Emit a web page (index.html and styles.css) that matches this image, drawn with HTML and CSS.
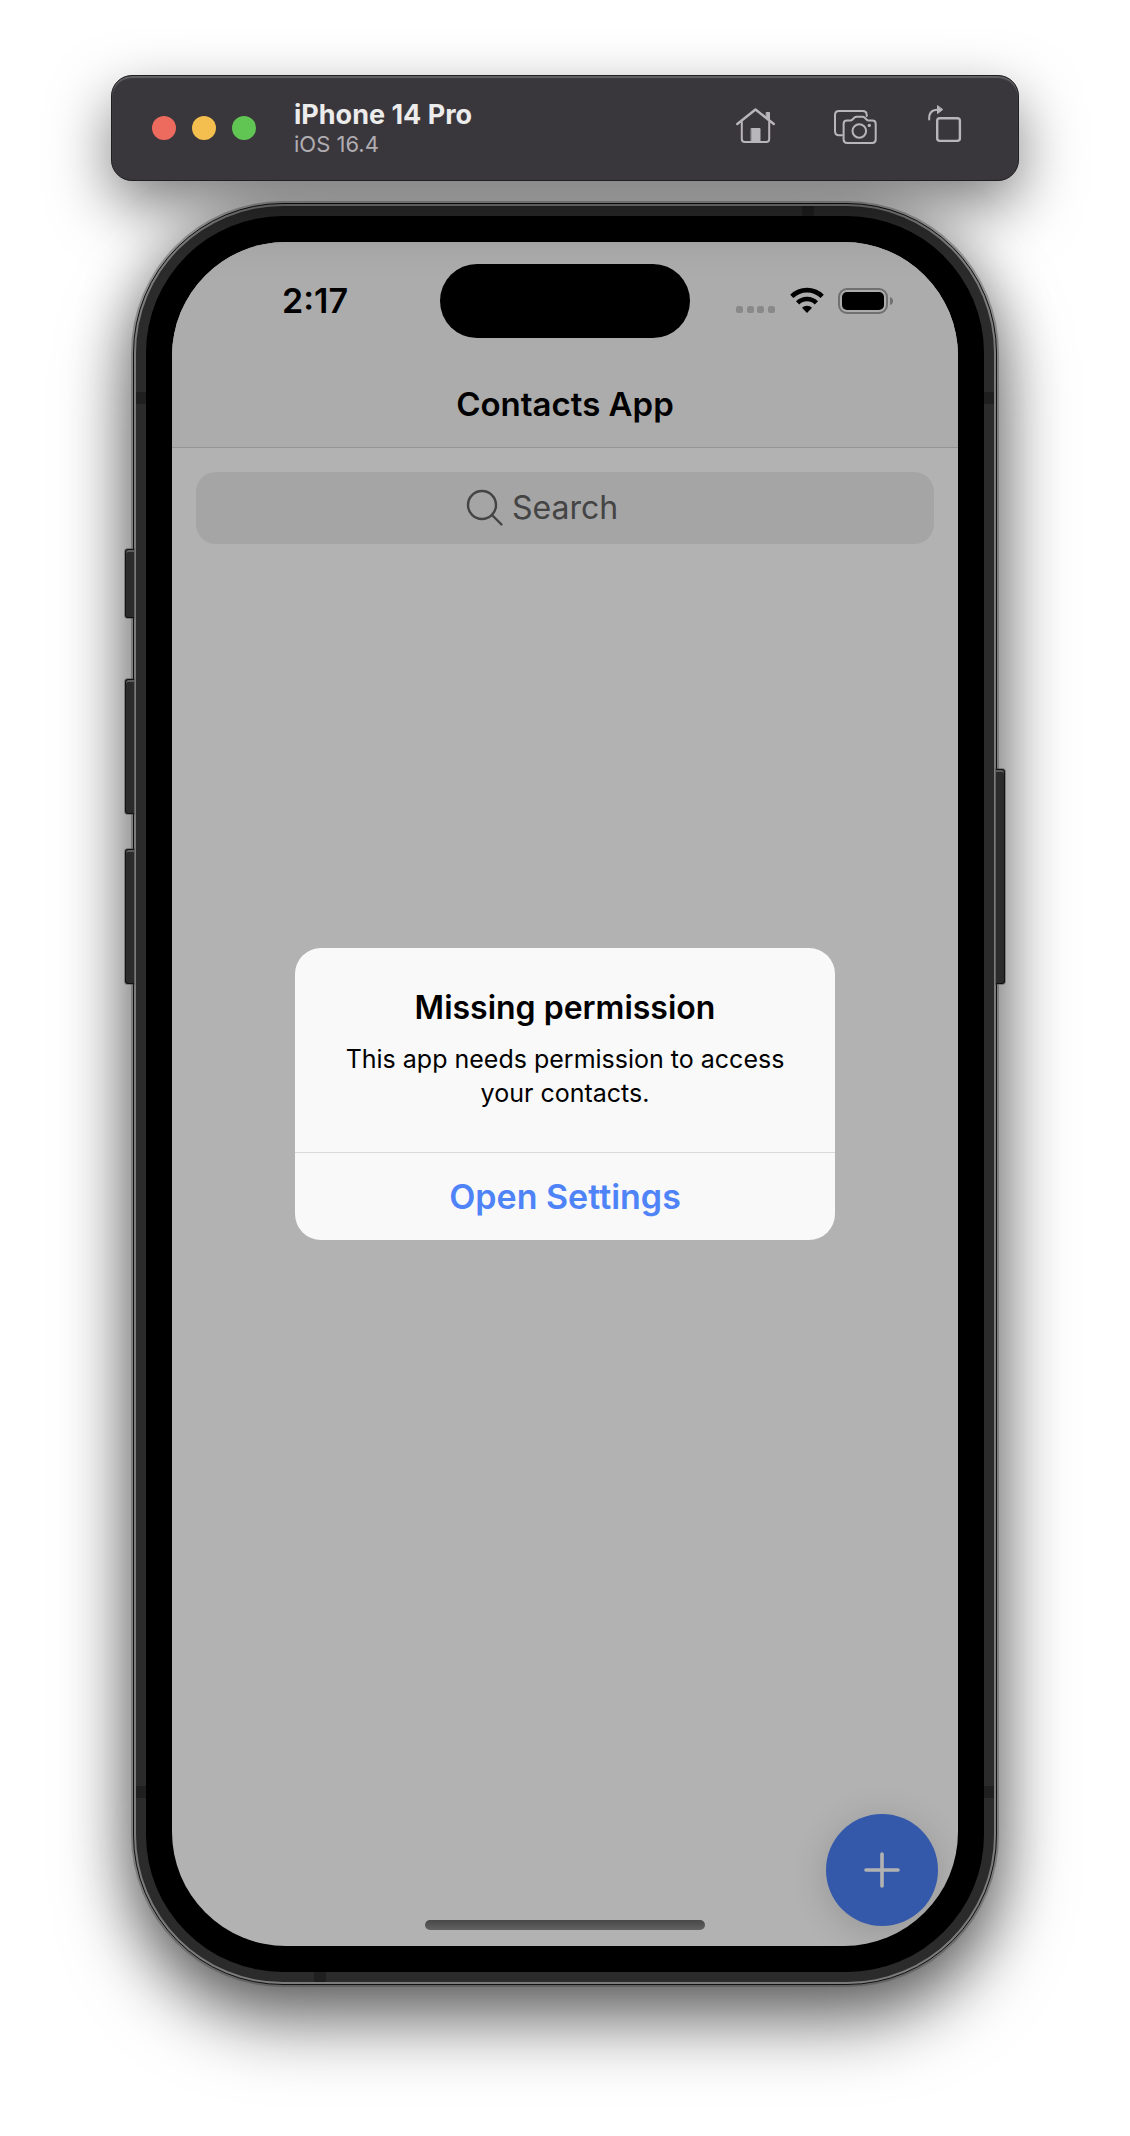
FILE: index.html
```html
<!DOCTYPE html>
<html lang="en">
<head>
<meta charset="utf-8">
<meta name="viewport" content="width=device-width, initial-scale=1">
<title>iPhone 14 Pro – Contacts App</title>
<link rel="stylesheet" href="styles.css">
</head>
<body>
<main class="simulator">
  <header class="toolbar">
    <div class="lights">
      <button class="light light-close" aria-label="Close"></button>
      <button class="light light-minimize" aria-label="Minimize"></button>
      <button class="light light-zoom" aria-label="Zoom"></button>
    </div>
    <div class="device-info">
      <div class="device-name">iPhone 14 Pro</div>
      <div class="device-os">iOS 16.4</div>
    </div>
    <div class="tools">
      <button class="tool" aria-label="Home">
        <svg width="44" height="44" viewBox="0 0 44 44" fill="none" stroke="currentColor" stroke-width="2" stroke-linecap="round" stroke-linejoin="round">
          <path d="M1.300 18 19.500 3.500 37.800 18" stroke-width="2.400"/>
          <path d="M5.800 16v17q0 3 3 3h21.400q3 0 3-3V16"/>
          <path d="M30.500 6.500h3v7l-3-2.400z" fill="currentColor" stroke-width="1"/>
          <path d="M15.500 22.500h8.500V36h-8.500z" fill="currentColor" stroke-width="1"/>
        </svg>
      </button>
      <button class="tool" aria-label="Screenshot">
        <svg width="48" height="44" viewBox="0 0 48 44" fill="none" stroke="currentColor" stroke-width="2" stroke-linecap="round" stroke-linejoin="round">
          <path d="M14 29.300h-3q-4 0-4-4V9q0-4 4-4h23.700q4 0 4 4v1"/>
          <path d="M19 14.500h3.500q1 0 2-1l2-2q1-.8 2-.8h6q1 0 2 .8l2 2q1 1 2 1h3.800q3.400 0 3.400 3.400v15.700q0 3.400-3.400 3.400H19q-3.400 0-3.400-3.400V17.900q0-3.400 3.400-3.400z"/>
          <circle cx="31.300" cy="25" r="6.800"/>
          <circle cx="41.300" cy="19.400" r="1.700" fill="currentColor" stroke="none"/>
        </svg>
      </button>
      <button class="tool" aria-label="Rotate">
        <svg width="44" height="44" viewBox="0 0 44 44" fill="none" stroke="currentColor" stroke-width="2" stroke-linecap="round" stroke-linejoin="round">
          <rect x="13.200" y="12.200" width="22.700" height="22.700" rx="2.600" stroke-width="2.400"/>
          <path d="M5.200 13.500q-.6-9.700 8.300-9.700"/>
          <path d="M13.500 0v7.600L18.500 3.800z" fill="currentColor" stroke-width="1"/>
        </svg>
      </button>
    </div>
  </header>

  <section class="phone">
    <span class="key key-silent"></span>
    <span class="key key-up"></span>
    <span class="key key-down"></span>
    <span class="key key-power"></span>
    <div class="band">
      <span class="seam seam-top"></span>
      <span class="seam seam-bottom"></span>
      <span class="seam seam-side seam-high"></span>
      <span class="seam seam-side seam-low"></span>
      <div class="bezel">
        <div class="screen">
          <div class="app-header">
            <div class="status-bar">
              <time class="clock">2:17</time>
              <div class="island"></div>
              <div class="indicators">
                <svg width="40" height="26" viewBox="0 0 40 26" fill="#898989">
                  <rect x="0" y="18" width="7" height="7" rx="2.600"/><rect x="11" y="18" width="7" height="7" rx="2.600"/><rect x="21" y="18" width="7" height="7" rx="2.600"/><rect x="32" y="18" width="7" height="7" rx="2.600"/>
                </svg>
                <svg width="34" height="26" viewBox="0 0 34 26" fill="none" stroke="#000" stroke-width="4.600">
                  <path d="M1.800 8.400a21.500 21.500 0 0 1 30.400 0"/>
                  <path d="M7.600 14.800a13.400 13.400 0 0 1 18.800 0"/>
                  <path d="M12 19.800a7 7 0 0 1 10 0L17 25z" fill="#000" stroke="none"/>
                </svg>
                <svg width="56" height="26" viewBox="0 0 56 26">
                  <rect x="1" y="1" width="48" height="24" rx="8" fill="none" stroke="#707070" stroke-width="2"/>
                  <rect x="4" y="4" width="42" height="18" rx="5"/>
                  <path d="M52 9q3 1 3 4t-3 4z" fill="#707070"/>
                </svg>
              </div>
            </div>
            <h1 class="app-title">Contacts App</h1>
          </div>
          <label class="search">
            <svg width="38" height="38" viewBox="0 0 38 38" fill="none" stroke="#444" stroke-width="2.400" stroke-linecap="round">
              <circle cx="16" cy="16" r="14"/><path d="M26 26l9.500 9.500"/>
            </svg>
            <input class="search-input" type="text" placeholder="Search" aria-label="Search">
          </label>
          <div class="dialog" role="alertdialog" aria-labelledby="dialog-title" aria-describedby="dialog-text">
            <div class="dialog-body">
              <h2 class="dialog-title" id="dialog-title">Missing permission</h2>
              <p class="dialog-text" id="dialog-text">This app needs permission to access your contacts.</p>
            </div>
            <button class="dialog-action">Open Settings</button>
          </div>
          <button class="add" aria-label="Add contact">
            <svg width="36" height="36" viewBox="0 0 36 36" fill="none" stroke="#b2b2b2" stroke-width="3.600" stroke-linecap="round"><path d="M18 2v32M2 18h32"/></svg>
          </button>
          <span class="home-indicator"></span>
        </div>
      </div>
    </div>
  </section>
</main>
</body>
</html>
```
FILE: styles.css
```css
* {
  box-sizing: border-box;
}

body {
  margin: 0;
  background: #fff;
  color: #000;
  font-family: Inter, "Liberation Sans", sans-serif;
}

button {
  border: 0;
  padding: 0;
  font: inherit;
}

svg {
  display: block;
  flex: none;
  overflow: visible;
}

.simulator {
  max-width: 1130px;
  margin: 0 auto;
  padding: 75px 111px 150px;
  overflow: hidden;
}

/* Simulator window toolbar */
.toolbar {
  position: relative;
  z-index: 1;
  display: flex;
  align-items: center;
  height: 106px;
  padding: 0 50px 0 40px;
  border: 1px solid #1f1e20;
  border-radius: 21px;
  background: #3a373c;
  box-shadow: inset 0 2px 1px #626164, 0 24px 60px rgba(0, 0, 0, 0.5);
}

.lights {
  display: flex;
  gap: 16px;
}

.light {
  width: 24px;
  height: 24px;
  border-radius: 50%;
}

.light-close { background: #ed6a5e; }
.light-minimize { background: #f5bf4f; }
.light-zoom { background: #61c554; }

.device-info {
  margin-left: 38px;
}

.device-name {
  color: #ececec;
  font-size: 27px;
  font-weight: 700;
  line-height: 32px;
}

.device-os {
  color: #b0adb3;
  font-size: 22px;
  line-height: 26px;
}

.tools {
  display: flex;
  gap: 48px;
  margin-left: auto;
}

.tool {
  background: none;
  color: #b8b5bb;
}

/* Phone body */
.phone {
  position: relative;
  margin: 22px 22px 0;
  border: 1px solid #111;
  border-radius: 150px;
  background: #7b7b7b;
  padding: 2px;
  box-shadow: 0 0 0 2px rgba(60, 60, 60, 0.35), 0 0 60px rgba(0, 0, 0, 0.3), 0 36px 72px rgba(0, 0, 0, 0.55);
}

.band {
  position: relative;
  padding: 10px;
  border-radius: 147px;
  background: #2b2b2b;
}

.bezel {
  position: relative;
  padding: 26px;
  border-radius: 137px;
  background: #000;
}

.key {
  position: absolute;
  left: -9px;
  width: 9px;
  border: 1px solid #111;
  border-right: 0;
  border-radius: 3px 0 0 3px;
  background: #2b2b2b;
  box-shadow: inset 0 2px #5c5c5c, 0 0 0 1px rgba(60, 60, 60, 0.4);
}

.key-silent { top: 345px; height: 69px; }
.key-up { top: 475px; height: 135px; }
.key-down { top: 645px; height: 135px; }

.key-power {
  top: 565px;
  right: -9px;
  left: auto;
  height: 215px;
  border-right: 1px solid #111;
  border-left: 0;
  border-radius: 0 3px 3px 0;
}

.seam {
  position: absolute;
  width: 12px;
  height: 10px;
  background: #1f1f1f;
}

.seam-top { top: 0; right: 180px; }
.seam-bottom { bottom: 0; left: 178px; }
.seam-side { right: 0; left: 0; width: auto; height: 12px; }
.seam-high { top: 186px; }
.seam-low { bottom: 184px; }

/* App screen */
.screen {
  position: relative;
  display: flex;
  flex-direction: column;
  min-height: 1704px;
  border-radius: 114px;
  background: #b2b2b2;
  overflow: hidden;
}

.app-header {
  border-bottom: 1px solid #959595;
  background: #acacac;
}

.status-bar {
  display: grid;
  grid-template-columns: 1fr 250px 1fr;
  align-items: center;
  padding-top: 22px;
}

.clock {
  padding-left: 18px;
  font-size: 34px;
  font-weight: 600;
  line-height: 40px;
  text-align: center;
}

.island {
  height: 74px;
  border-radius: 37px;
  background: #000;
}

.indicators {
  display: flex;
  gap: 14px;
  padding-left: 46px;
}

.app-title {
  margin: 0;
  padding: 44px 0 21px;
  font-size: 33px;
  font-weight: 600;
  line-height: 44px;
  text-align: center;
}

.search {
  display: flex;
  align-items: center;
  justify-content: center;
  gap: 8px;
  height: 72px;
  margin: 24px;
  border-radius: 20px;
  background: #a5a5a5;
}

.search-input {
  width: 152px;
  border: 0;
  padding: 0;
  background: none;
  color: #444;
  font: inherit;
  font-size: 32px;
  line-height: 44px;
}

.search-input::placeholder {
  color: #444;
  opacity: 1;
}

/* Alert shown over the contact list */
.dialog {
  position: absolute;
  inset: 0;
  width: 540px;
  max-width: 100%;
  height: fit-content;
  margin: auto;
  border-radius: 26px;
  background: #f9f9f9;
  text-align: center;
  overflow: hidden;
}

.dialog-body {
  padding: 38px 32px 42px;
}

.dialog-title {
  margin: 0 0 12px;
  font-size: 32px;
  font-weight: 600;
  line-height: 44px;
}

.dialog-text {
  margin: 0;
  font-size: 25px;
  line-height: 34px;
}

.dialog-action {
  width: 100%;
  height: 88px;
  border-top: 1px solid #dadada;
  background: none;
  color: #4f83f8;
  font-size: 34px;
  font-weight: 600;
}

.add {
  display: flex;
  align-items: center;
  justify-content: center;
  width: 112px;
  height: 112px;
  margin: auto 20px 20px auto;
  border-radius: 50%;
  background: #3459ab;
  box-shadow: 0 6px 36px rgba(0, 0, 0, 0.16);
}

.home-indicator {
  position: absolute;
  right: 0;
  bottom: 16px;
  left: 0;
  width: 280px;
  height: 10px;
  margin: auto;
  border-radius: 5px;
  background: linear-gradient(#484848, #626262);
}
```
